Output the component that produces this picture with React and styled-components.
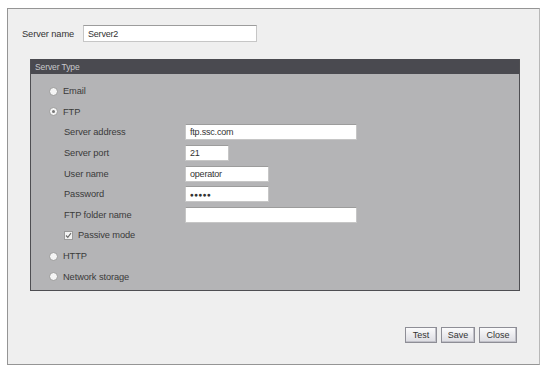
import React from "react";
import styled, { createGlobalStyle } from "styled-components";

const Global = createGlobalStyle`
  html, body { margin: 0; padding: 0; background: #ffffff; }
  body { font-family: "Liberation Sans", Arial, sans-serif; }
`;

const Page = styled.div`
  width: 546px;
  height: 368px;
  padding: 8px 0 0 7px;
  box-sizing: border-box;
`;

const Frame = styled.div`
  width: 533px;
  height: 357px;
  box-sizing: border-box;
  border: 1px solid #959595;
  border-right-color: #b8b8b8;
  background: #efefef;
  display: flex;
  flex-direction: column;
  padding: 16px 22px 0 14px;
`;

const NameRow = styled.div`
  display: flex;
  align-items: center;
  height: 17px;
`;

const NameLabel = styled.span`
  width: 61px;
  font-size: 9.3px;
  color: #333;
  letter-spacing: -0.1px;
`;

const Field = styled.div`
  width: ${(p) => p.$w}px;
  height: ${(p) => p.$h || 16}px;
  box-sizing: border-box;
  background: #ffffff;
  border: 1px solid #c6c6c6;
  border-top-color: #9c9c9c;
  font-size: ${(p) => (p.$dots ? "6.5px" : "9px")};
  color: #333;
  padding-left: 4px;
  display: flex;
  align-items: center;
  letter-spacing: ${(p) => (p.$dots ? "0.3px" : "-0.2px")};
`;

const Panel = styled.div`
  margin: 17px 0 0 8px;
  width: 490px;
  height: 232px;
  box-sizing: border-box;
  border: 1px solid #4e4e52;
  border-top: none;
  background: #b4b4b6;
  display: flex;
  flex-direction: column;
`;

const PanelHeader = styled.div`
  height: 15px;
  background: #4a4a50;
  color: #c9c9cc;
  font-size: 8.5px;
  padding-left: 4px;
  display: flex;
  align-items: center;
  letter-spacing: -0.1px;
`;

const PanelBody = styled.div`
  display: flex;
  flex-direction: column;
  padding: 7px 0 0 18px;
`;

const Row = styled.div`
  height: 20.6px;
  display: flex;
  align-items: center;
  padding-left: ${(p) => p.$indent || 0}px;
`;

const Radio = styled.span`
  width: 9px;
  height: 9px;
  border-radius: 50%;
  box-sizing: border-box;
  background: #f4f4f4;
  border: 1px solid #9a9a9a;
  margin-right: 5px;
  position: relative;
  &::after {
    content: "";
    display: ${(p) => (p.$on ? "block" : "none")};
    position: absolute;
    left: 2px;
    top: 2px;
    width: 3px;
    height: 3px;
    border-radius: 50%;
    background: #777;
  }
`;

const Check = styled.span`
  width: 9px;
  height: 9px;
  box-sizing: border-box;
  background: #f2f2f2;
  border: 1px solid #9a9a9a;
  margin-right: 5px;
  display: flex;
  align-items: center;
  justify-content: center;
`;

const Text = styled.span`
  font-size: 9.3px;
  color: #3a3a3a;
  letter-spacing: -0.1px;
  width: ${(p) => (p.$w ? `${p.$w}px` : "auto")};
`;

const Footer = styled.div`
  margin-top: 36px;
  display: flex;
  justify-content: flex-end;
  gap: 4px;
`;

const Button = styled.button`
  width: ${(p) => p.$w}px;
  height: 16px;
  padding: 0;
  box-sizing: border-box;
  border: 1px solid #8e8e96;
  background: linear-gradient(#fbfbfc, #dcdce2);
  font-family: "Liberation Sans", Arial, sans-serif;
  font-size: 9px;
  color: #333;
  box-shadow: inset -1px -1px 0 #c0c0c8;
`;

const fields = [
  { label: "Server address", w: 172, value: "ftp.ssc.com" },
  { label: "Server port", w: 44, value: "21" },
  { label: "User name", w: 84, value: "operator" },
  { label: "Password", w: 84, value: "\u25CF\u25CF\u25CF\u25CF\u25CF", dots: true },
  { label: "FTP folder name", w: 172, value: "" },
];

export default function App() {
  return (
    <>
      <Global />
      <Page>
        <Frame>
          <NameRow>
            <NameLabel>Server name</NameLabel>
            <Field $w={174} $h={17}>Server2</Field>
          </NameRow>
          <Panel>
            <PanelHeader>Server Type</PanelHeader>
            <PanelBody>
              <Row>
                <Radio />
                <Text>Email</Text>
              </Row>
              <Row>
                <Radio $on />
                <Text>FTP</Text>
              </Row>
              {fields.map((f) => (
                <Row key={f.label} $indent={15}>
                  <Text $w={121}>{f.label}</Text>
                  <Field $w={f.w} $dots={f.dots}>
                    {f.value}
                  </Field>
                </Row>
              ))}
              <Row $indent={15}>
                <Check>
                  <svg width="7" height="7" viewBox="0 0 7 7">
                    <path d="M1 3.5 L2.8 5.3 L6 1.2" fill="none" stroke="#6a6a6a" strokeWidth="1.1" />
                  </svg>
                </Check>
                <Text>Passive mode</Text>
              </Row>
              <Row>
                <Radio />
                <Text>HTTP</Text>
              </Row>
              <Row>
                <Radio />
                <Text>Network storage</Text>
              </Row>
            </PanelBody>
          </Panel>
          <Footer>
            <Button $w={32}>Test</Button>
            <Button $w={34}>Save</Button>
            <Button $w={38}>Close</Button>
          </Footer>
        </Frame>
      </Page>
    </>
  );
}
